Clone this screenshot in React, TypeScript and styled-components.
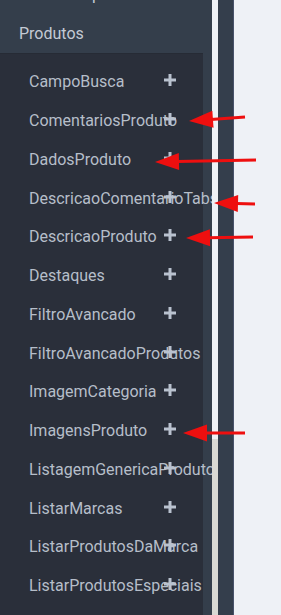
import React from "react";
import styled, { createGlobalStyle } from "styled-components";

const Global = createGlobalStyle`
  html, body { margin: 0; padding: 0; }
  body {
    width: 281px;
    height: 615px;
    overflow: hidden;
    background: #eef1f6;
    font-family: Roboto, "Noto Sans", "Liberation Sans", sans-serif;
  }
`;

const Page = styled.div`
  position: relative;
  display: flex;
  width: 281px;
  height: 615px;
  overflow: hidden;
`;

const Sidebar = styled.nav`
  width: 212px;
  flex: none;
  height: 100%;
  background: #343e4b;
  overflow: hidden;
  display: flex;
  flex-direction: column;
`;

const SectionList = styled.div`
  margin-top: -25px;
  display: flex;
  flex-direction: column;
`;

const SectionTitle = styled.div`
  height: 39px;
  padding-left: 19px;
  display: flex;
  align-items: center;
  font-size: 16px;
  color: #c4cad4;
  white-space: nowrap;
`;

const SubPanel = styled.ul`
  list-style: none;
  margin: 0;
  width: 203px;
  flex: 1;
  padding: 9.4px 0 0;
  background: #2a2f3a;
  box-shadow: inset 0 1px 0 #262b35;
`;

const Item = styled.li`
  display: grid;
  grid-template-columns: 29px 135px 12px;
  align-items: center;
  height: 38.77px;
`;

const ItemLabel = styled.span`
  grid-column: 2 / -1;
  grid-row: 1;
  white-space: nowrap;
  font-size: 16px;
  color: #b6bec9;
`;

const PlusIcon = styled.svg`
  grid-column: 3;
  grid-row: 1;
  width: 12px;
  height: 12px;
  margin-top: -3px;
  display: block;
`;

const ScrollTrack = styled.div`
  width: 6px;
  flex: none;
  background: #eef1f6;
  display: flex;
  flex-direction: column;
  justify-content: flex-end;
`;

const ScrollThumb = styled.div`
  height: 176px;
  background: #d9d9d4;
`;

const Gutter = styled.div`
  width: 15px;
  flex: none;
  background: #343e4c;
  border-right: 1px solid #48526a;
`;

const Main = styled.main`
  flex: 1;
  background: #eef1f6;
`;

const Overlay = styled.svg`
  position: absolute;
  inset: 0;
  width: 281px;
  height: 615px;
  pointer-events: none;
`;

const items = [
  "CampoBusca",
  "ComentariosProduto",
  "DadosProduto",
  "DescricaoComentarioTabs",
  "DescricaoProduto",
  "Destaques",
  "FiltroAvancado",
  "FiltroAvancadoProdutos",
  "ImagemCategoria",
  "ImagensProduto",
  "ListagemGenericaProduto",
  "ListarMarcas",
  "ListarProdutosDaMarca",
  "ListarProdutosEspeciais",
];

const arrows: [number, number, number, number][] = [
  [189, 121, 245, 117],
  [155, 162, 256, 160],
  [214, 203, 255, 204],
  [186, 238, 253, 237],
  [183, 433, 245, 433],
];

function Arrow({ tx, ty, sx, sy }: { tx: number; ty: number; sx: number; sy: number }) {
  const dx = sx - tx;
  const dy = sy - ty;
  const len = Math.hypot(dx, dy);
  const ux = dx / len;
  const uy = dy / len;
  const hl = 24;
  const hw = 8.5;
  const bx = tx + ux * hl;
  const by = ty + uy * hl;
  const px = -uy;
  const py = ux;
  const pts = `${tx},${ty} ${bx + px * hw},${by + py * hw} ${bx - px * hw},${by - py * hw}`;
  return (
    <g>
      <line x1={bx - ux * 2} y1={by - uy * 2} x2={sx} y2={sy} stroke="#ee0f0f" strokeWidth={3} />
      <polygon points={pts} fill="#ee0f0f" />
    </g>
  );
}

function Plus() {
  return (
    <PlusIcon viewBox="0 0 12 12">
      <rect x="4.5" y="0" width="3" height="12" fill="#b9c2cf" />
      <rect x="0" y="4.5" width="12" height="3" fill="#b9c2cf" />
    </PlusIcon>
  );
}

export default function App() {
  return (
    <>
      <Global />
      <Page>
        <Sidebar>
          <SectionList>
            <SectionTitle>Header Topo</SectionTitle>
            <SectionTitle>Produtos</SectionTitle>
          </SectionList>
          <SubPanel>
            {items.map((name) => (
              <Item key={name}>
                <ItemLabel>{name}</ItemLabel>
                <Plus />
              </Item>
            ))}
          </SubPanel>
        </Sidebar>
        <ScrollTrack>
          <ScrollThumb />
        </ScrollTrack>
        <Gutter />
        <Main />
        <Overlay viewBox="0 0 281 615">
          {arrows.map(([tx, ty, sx, sy], i) => (
            <Arrow key={i} tx={tx} ty={ty} sx={sx} sy={sy} />
          ))}
        </Overlay>
      </Page>
    </>
  );
}
